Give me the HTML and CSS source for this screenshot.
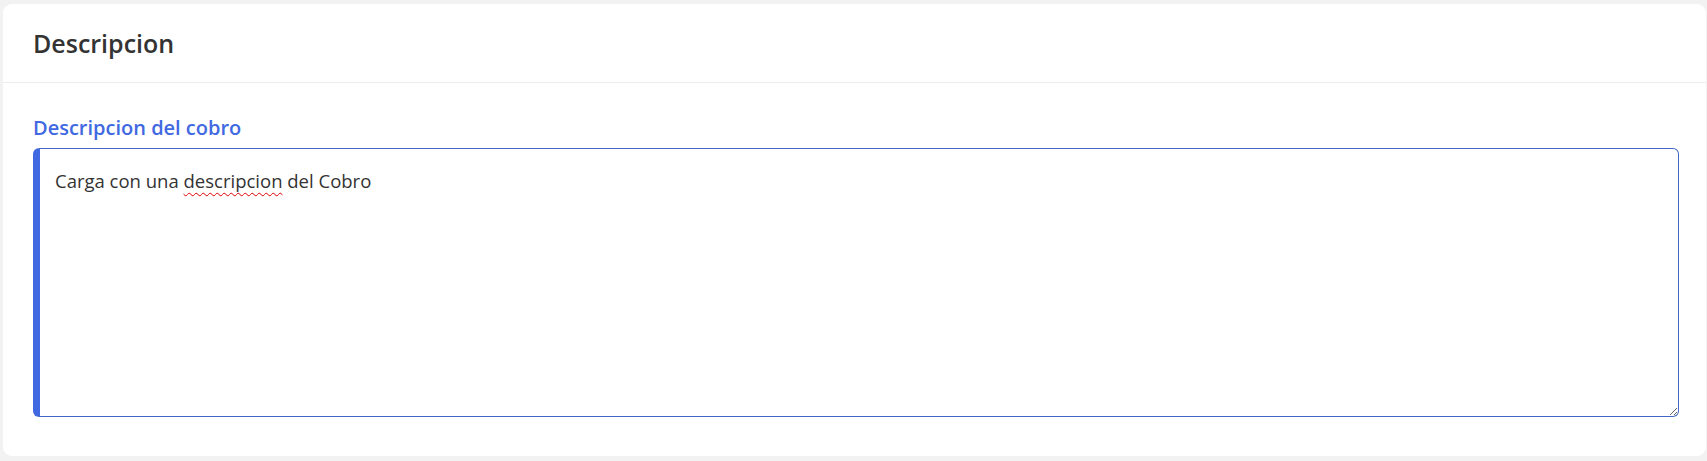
FILE: index.html
```html
<!DOCTYPE html>
<html lang="es">
<head>
<meta charset="utf-8">
<title>Descripcion</title>
<link rel="stylesheet" href="styles.css">
</head>
<body>
<section class="card">
  <header class="card-header">
    <h2 class="card-title">Descripcion</h2>
  </header>
  <div class="card-body">
    <label class="field-label" for="desc">Descripcion del cobro</label>
    <div class="textarea" id="desc">Carga con una <span class="misspelled">descripcion</span> del Cobro</div>
  </div>
</section>
</body>
</html>
```
FILE: styles.css
```css
* { box-sizing: border-box; }
html, body { height: 100%; }
body {
  margin: 0;
  padding: 4px 1px 5px 3px;
  background: #f2f2f2;
  font-family: "Open Sans", "Noto Sans", sans-serif;
  color: #333;
}
.card {
  background: #fff;
  border-radius: 9px;
  height: 452px;
  display: flex;
  flex-direction: column;
}
.card-header {
  height: 79px;
  border-bottom: 1px solid #ececec;
  padding: 22px 30px 0;
}
.card-title {
  margin: 0;
  font-size: 25px;
  font-weight: 600;
  color: #333;
  line-height: 34px;
}
.card-body {
  padding: 32px 27px 0 30px;
  display: flex;
  flex-direction: column;
}
.field-label {
  font-size: 20px;
  font-weight: 600;
  color: #4169e1;
  line-height: 26px;
  margin-bottom: 7px;
}
.textarea {
  height: 269px;
  border: 1px solid #4466c4;
  border-left: 7px solid #4169e1;
  border-radius: 6px;
  padding: 18px 15px;
  font-size: 18.5px;
  line-height: 28px;
  color: #333;
  resize: vertical;
  overflow: auto;
}
.misspelled {
  text-decoration: underline wavy #e00000;
  text-decoration-thickness: 1px;
  text-decoration-skip-ink: none;
  text-underline-offset: 4px;
}
```
